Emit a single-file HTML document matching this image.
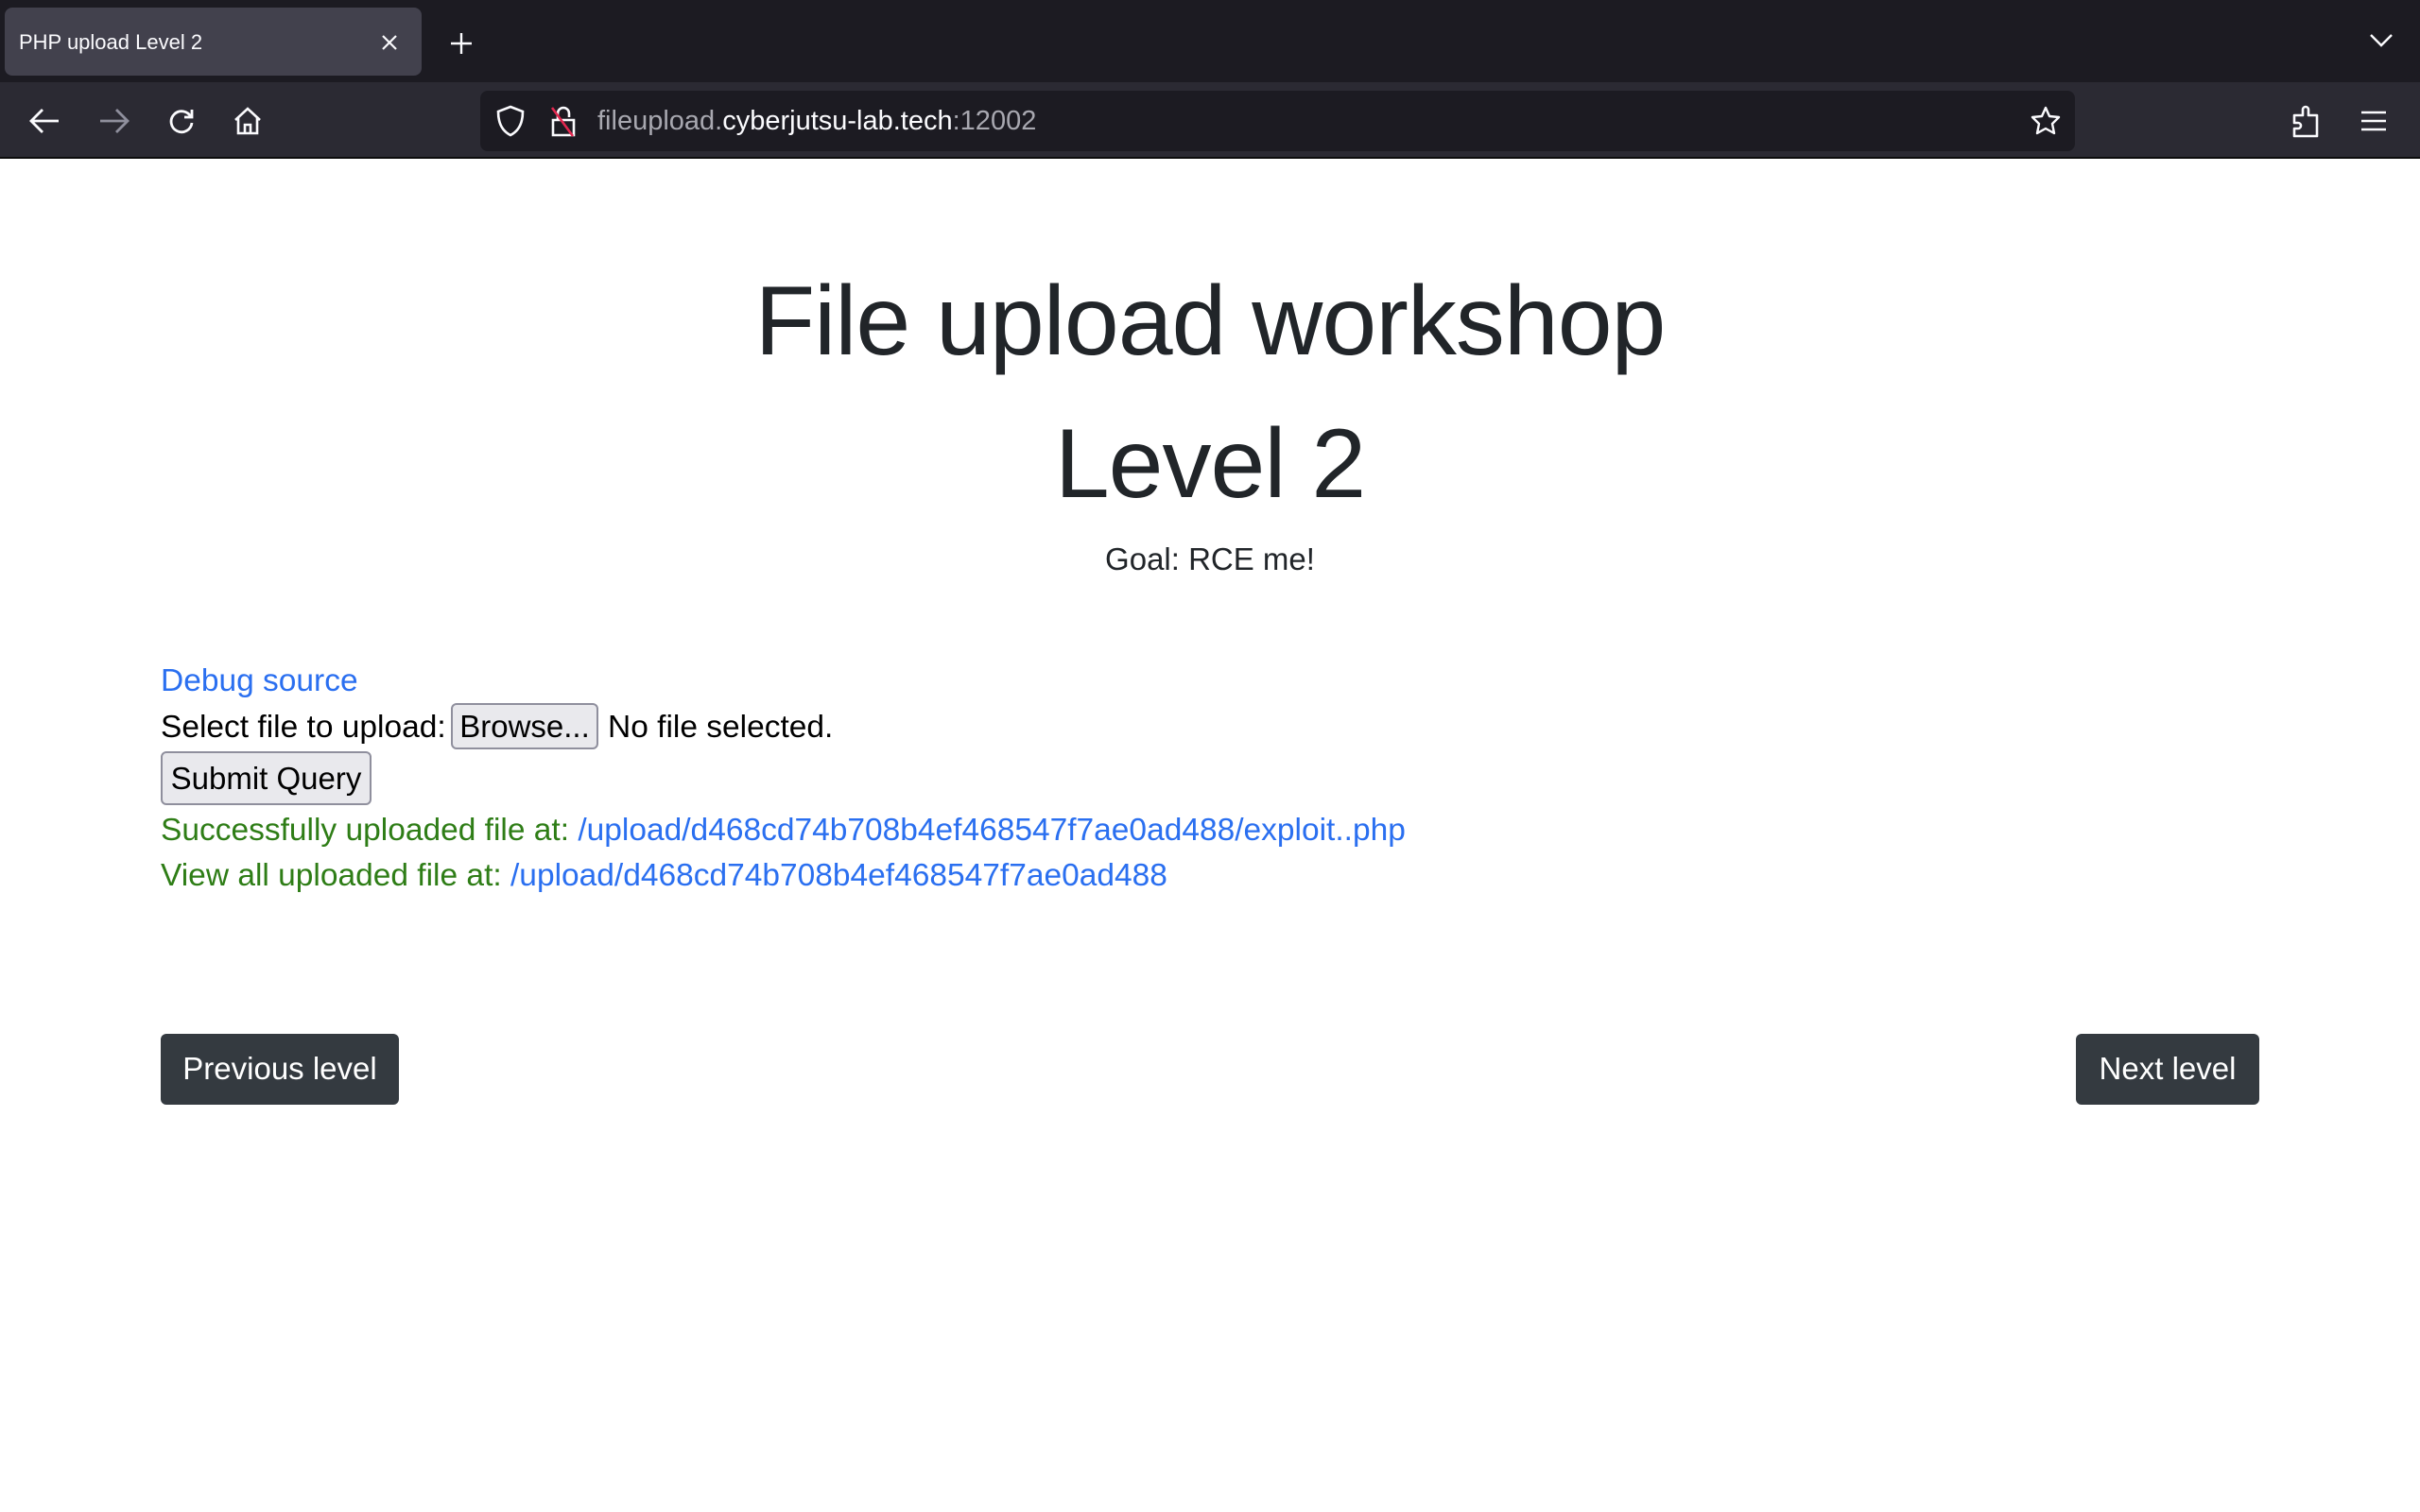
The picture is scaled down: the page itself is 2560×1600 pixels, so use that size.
<!DOCTYPE html>
<html><head><meta charset="utf-8"><style>
*{margin:0;padding:0;box-sizing:border-box}
body{width:2560px;height:1600px;background:#fff;font-family:"Liberation Sans",sans-serif;position:relative;overflow:hidden;color:#212529}
.a{position:absolute;white-space:nowrap;line-height:1}
#tabs{position:absolute;left:0;top:0;width:2560px;height:87px;background:#1c1b22}
#tab{position:absolute;left:5px;top:8px;width:441px;height:72px;background:#42414d;border-radius:8px}
#tb{position:absolute;left:0;top:87px;width:2560px;height:81px;background:#2b2a33;border-bottom:2px solid #0c0c0d}
#url{position:absolute;left:508px;top:96px;width:1687px;height:64px;background:#1c1b22;border-radius:8px}
.btn{position:absolute;background:#343a40;color:#fff;border-radius:6px;font-size:33px;line-height:74px;text-align:center}
.nb{position:absolute;background:#e9e9ed;border:2px solid #8f8f9d;border-radius:6px;font-size:33px;color:#000;text-align:center}
a{color:#2a6ff0;text-decoration:none}
.g{color:#2e7d16}
.t{font-size:33.5px}
</style></head><body>
<div id="tabs"></div>
<div id="tab"></div>
<div class="a" style="left:20px;top:34px;font-size:22px;color:#fbfbfe">PHP upload Level 2</div>
<svg class="a" style="left:400px;top:33px" width="24" height="24" viewBox="0 0 24 24" stroke="#fbfbfe" stroke-width="2.2"><path d="M5 5L19 19M19 5L5 19"/></svg>
<svg class="a" style="left:474px;top:32px" width="28" height="28" viewBox="0 0 28 28" stroke="#fbfbfe" stroke-width="2.4"><path d="M14 3V25M3 14H25"/></svg>
<svg class="a" style="left:2506px;top:34px" width="26" height="18" viewBox="0 0 26 18" fill="none" stroke="#fbfbfe" stroke-width="2.4"><path d="M2 3L13 14L24 3"/></svg>
<div id="tb"></div>
<svg class="a" style="left:30px;top:113px" width="36" height="30" viewBox="0 0 36 30" fill="none" stroke="#fbfbfe" stroke-width="2.8"><path d="M32 15H4M15 3L3 15L15 27"/></svg>
<svg class="a" style="left:102px;top:113px" width="36" height="30" viewBox="0 0 36 30" fill="none" stroke="#8f8f9d" stroke-width="2.8"><path d="M4 15H32M21 3L33 15L21 27"/></svg>
<svg class="a" style="left:176px;top:112px" width="32" height="32" viewBox="0 0 32 32" fill="none" stroke="#fbfbfe" stroke-width="2.8"><path d="M26 12A11 11 0 1 0 27 18"/><path d="M27 4V12H19"/></svg>
<svg class="a" style="left:246px;top:112px" width="32" height="32" viewBox="0 0 32 32" fill="none" stroke="#fbfbfe" stroke-width="2.6"><path d="M3 15L16 3L29 15M6 12V29H26V12M13 29V20H19V29"/></svg>
<div id="url"></div>
<svg class="a" style="left:524px;top:111px" width="32" height="34" viewBox="0 0 32 34" fill="none" stroke="#fbfbfe" stroke-width="2.6"><path d="M16 2L29 7C29 20 24 28 16 32C8 28 3 20 3 7Z"/></svg>
<svg class="a" style="left:580px;top:110px" width="32" height="36" viewBox="0 0 32 36" fill="none" stroke-width="2.6"><path stroke="#fbfbfe" d="M5 17H27V33H5ZM10 17V10A6 6 0 0 1 22 10V14"/><path stroke="#e22850" d="M4 4L26 34"/></svg>
<div class="a" style="left:632px;top:114px;font-size:29px;color:#a8a8b0">fileupload.<span style="color:#fbfbfe">cyberjutsu-lab.tech</span>:12002</div>
<svg class="a" style="left:2147px;top:111px" width="34" height="34" viewBox="0 0 34 34" fill="none" stroke="#fbfbfe" stroke-width="2.4" stroke-linejoin="round"><path d="M17 3L21 12L31 13L24 20L26 30L17 25L8 30L10 20L3 13L13 12Z"/></svg>
<svg class="a" style="left:2424px;top:110px" width="30" height="36" viewBox="0 0 30 36" fill="none" stroke="#fbfbfe" stroke-width="2.6" stroke-linejoin="round"><path d="M3 34V26H7A3 3 0 0 0 7 20H3V12H12V6A3 3 0 0 1 18 6V12H27V34Z"/></svg>
<svg class="a" style="left:2496px;top:116px" width="30" height="24" viewBox="0 0 30 24" stroke="#fbfbfe" stroke-width="2.6"><path d="M2 3H28M2 12H28M2 21H28"/></svg>

<div class="a" style="left:0;width:2560px;text-align:center;top:288px;font-size:104px;letter-spacing:-1px">File upload workshop</div>
<div class="a" style="left:0;width:2560px;text-align:center;top:439px;font-size:104px;letter-spacing:-1px">Level 2</div>
<div class="a" style="left:0;width:2560px;text-align:center;top:575px;font-size:33px">Goal: RCE me!</div>

<div class="a t" style="left:170px;top:704px"><a>Debug source</a></div>
<div class="a t" style="left:170px;top:753px;color:#000">Select file to upload:</div>
<div class="nb" style="left:477px;top:744px;width:156px;height:49px;line-height:46px">Browse...</div>
<div class="a t" style="left:643px;top:753px;color:#000">No file selected.</div>
<div class="nb" style="left:170px;top:795px;width:223px;height:57px;line-height:53px">Submit Query</div>
<div class="a g t" style="left:170px;top:862px">Successfully uploaded file at: <a>/upload/d468cd74b708b4ef468547f7ae0ad488/exploit..php</a></div>
<div class="a g t" style="left:170px;top:910px">View all uploaded file at: <a>/upload/d468cd74b708b4ef468547f7ae0ad488</a></div>

<div class="btn" style="left:170px;top:1094px;width:252px;height:75px">Previous level</div>
<div class="btn" style="left:2196px;top:1094px;width:194px;height:75px">Next level</div>
</body></html>
